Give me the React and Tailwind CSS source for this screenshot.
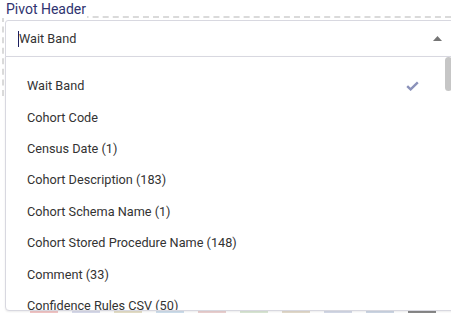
import React from 'react';

const options = [
    'Wait Band',
    'Cohort Code',
    'Census Date (1)',
    'Cohort Description (183)',
    'Cohort Schema Name (1)',
    'Cohort Stored Procedure Name (148)',
    'Comment (33)',
    'Confidence Rules CSV (50)',
];

const bgBits = ['#f3c6c6', '#d9dcec', '#e6e0c8', '#d0e0ee', '#ecd2d2', '#dbe8d6', '#e4dccd', '#d6dbe9', '#cfd8e6', '#8a8a8a'];

const App = () => {
    const selected = 'Wait Band';

    return (
        <div className="relative h-[313px] w-[451px] overflow-hidden bg-white font-['Roboto','Liberation_Sans',sans-serif]">
            <div className="relative z-10 -mb-[2px] w-fit bg-white pl-[6px] pr-[1px] pt-[1px] text-[14px] leading-[17px] text-[#2f3370]">
                Pivot Header
            </div>
            <div className="ml-[2px] h-[80px] border-l-2 border-t-2 border-dashed border-[#dadada] pl-[1px] pt-[2px]">
                <div className="flex h-[37px] w-[470px] items-center rounded-tl-[3px] border border-[#d8d8e0] pl-[12px]">
                    <span className="h-[16px] w-[1px] bg-[#1d2060]" />
                    <span className="text-[12.7px] text-[#333]">{selected}</span>
                    <svg className="ml-auto mr-[32px]" width="9" height="5" viewBox="0 0 9 5">
                        <path d="M0 5 L4.5 0 L9 5 Z" fill="#757575" />
                    </svg>
                </div>
            </div>

            {/* open menu */}
            <div className="absolute left-[5px] top-[56px] z-20 h-[255px] w-[470px] overflow-hidden rounded-bl-[4px] border border-[#d8d8e0] bg-white shadow-[0_1px_2px_rgba(0,0,0,0.08)]">
                <div className="pt-[13px]">
                    {options.map((opt) => (
                        <div key={opt} className="flex h-[31.4px] items-center pl-[21px] text-[12.7px] text-[#333]">
                            <span>{opt}</span>
                            {opt === selected && (
                                <svg className="ml-auto mr-[55px]" width="13" height="10" viewBox="0 0 13 10">
                                    <path d="M1.2 5.2 L4.6 8.4 L11.8 1.4" fill="none" stroke="#8b92ba" strokeWidth="2.4" />
                                </svg>
                            )}
                        </div>
                    ))}
                </div>
                <div className="absolute left-[439px] top-0 h-[34px] w-[7px] rounded-[4px] bg-[#c6c6c6]" />
            </div>

            {/* page content peeking out below the menu */}
            <div className="absolute left-[30px] top-[311px] flex gap-[14px]">
                {bgBits.map((c, i) => (
                    <div key={i} className="h-[2px] w-[28px]" style={{ backgroundColor: c }} />
                ))}
            </div>
        </div>
    );
};

export default App;
